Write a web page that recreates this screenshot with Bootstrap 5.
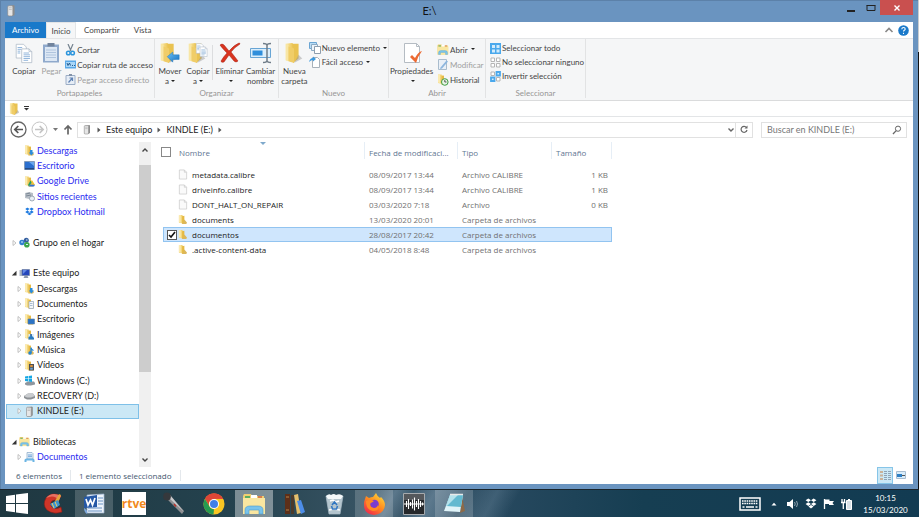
<!DOCTYPE html>
<html lang="es">
<head>
<meta charset="utf-8">
<meta name="viewport" content="width=device-width, initial-scale=1">
<title>E:\</title>
<link href="https://cdn.jsdelivr.net/npm/bootstrap@5.3.0/dist/css/bootstrap.min.css" rel="stylesheet">
<style>
:root{--line:#e3e5e7;--frame:#6a94c0}
body{font-family:Lato,"Open Sans",sans-serif;font-size:9px;line-height:10px;color:#222;background:linear-gradient(#c9cdd0 52px,#111 52px)}
svg{display:block;flex:none}
button,input{font:inherit;color:inherit}
.plain{border:0;background:none;padding:0;color:inherit;text-decoration:none;white-space:nowrap}
.win{background:var(--frame);padding:0 5px 5px;margin-right:1px;min-height:0;box-shadow:inset 1px 1px #5c81a9}
.titlebar{height:22px}
.caption{font-size:11px;line-height:22px;color:#111}
.winctl{height:15px}
.ctl{width:19px;height:15px;display:grid;place-items:center}
.ctl-close{width:33px;background:#c9504f}
.tabs{height:16px;font-size:8px;color:#444}
.tab{height:16px;min-width:30px}
.tab-file{background:#1979ca;color:#fff;width:41px}
.tab-on{background:#f5f6f7;border:1px solid var(--line);border-bottom:0}
.ribbon{height:63px;background:#f5f6f7;border-top:1px solid var(--line);border-bottom:1px solid #dadbdc;font-size:8px;color:#444}
.group{border-right:1px solid #e2e3e4;padding:0 1px;margin-bottom:2px}
.g-clip{width:150px}.g-org{width:124px}.g-new{width:110px}.g-open{width:97px}.g-sel{width:100px}
.group-name{color:#959595;line-height:10px}
.big{display:flex;flex-direction:column;align-items:center;padding-top:3px;line-height:10px}
.big svg{margin-bottom:2px}
.w28{width:28px}.w31{width:31px}.w43{width:43px}
.split{width:1px;margin:6px 1px 8px 0;background:#dcdddf}
.off{color:#a0a0a0}
.minis{padding-top:3px}
.minis .plain{display:flex;align-items:center;gap:1px;height:15px}
.minis-tight{padding-top:2px}
.minis-tight .plain{height:14px}
.caret{display:inline-block;border:2px solid transparent;border-top-color:#222;border-bottom:0;margin:0 0 1px 2px;vertical-align:middle}
.qat{height:16px;border-bottom:1px solid var(--line)}
.addr{height:25px;padding:0 6px 0 5px}
.box{height:16px;border:1px solid #e1e1e1;background:#fff}
.search{width:146px}
.search input{min-width:0;border:0;outline:0;padding:0 0 0 5px;background:none}
.search input::placeholder{color:#777;opacity:1}
.side{width:134px}
.tree{padding:1px 0 2px 1px}
.tree li{flex:1 1 0;min-height:0;display:flex}
.node{display:flex;align-items:center;flex:1;color:#222;text-decoration:none;white-space:nowrap;border:1px solid transparent;padding-left:4px}
.node.deep{padding-left:9px}
.node .ic{width:11px;height:11px;margin-right:3px}
.node.deep .ic{margin-right:2px}
.tw{width:8px;height:6px}
.node.blue{color:#2a2af0}
.node.on{background:#cbe8f6;border-color:#7ec0e8}
.sbar{width:12px;background:#f0f0f0}
.sbar-btn{height:23px;display:grid;place-items:center}
.thumb{flex:207;background:#cdcdcd}
.trail{flex:72}
.files,.status{font-family:"Open Sans","Noto Sans",sans-serif;font-size:8px}
.files{width:449px;table-layout:fixed;border-collapse:separate;border-spacing:0;margin-left:12px;white-space:nowrap}
.files th{height:25px;font-weight:400;color:#5f7692;vertical-align:top;padding:6px 4px 0;background:linear-gradient(#e6eef6,#e6eef6) right top/1px 17px no-repeat}
.files th.nm{padding-left:1px;position:relative}
.files th.ck{background:none;padding:5px 0 0}
.sorted{position:absolute;left:81px;top:0}
.files td{height:15px;padding:0 4px;color:#707070;border:1px solid transparent;border-width:1px 0;line-height:13px}
.files td.nm{color:#222;padding-left:0}
.files td.ck{padding:0 0 0 3px}
.files tr.on td{background:#cfe6fd;border-color:#92c4f0}
.files tr.on td:first-child{border-left-width:1px}
.files tr.on td:last-child{border-right-width:1px}
.c-ck{width:15px}.c-nm{width:187px}.c-dt{width:93px}.c-tp{width:94px}
.tick{appearance:none;width:10px;height:10px;margin:0;border:1px solid #888;background:#fff;display:block}
th .tick{margin-left:-2px}
.tick:checked{border-color:#555;background:#fff url("data:image/svg+xml,%3Csvg xmlns='http://www.w3.org/2000/svg' viewBox='0 0 8 8'%3E%3Cpath d='M1 4l2 2 4-5' fill='none' stroke='%23111' stroke-width='1.6'/%3E%3C/svg%3E") center/8px no-repeat}
.status{height:17px;color:#44586f;padding-left:11px}
.status span{border-right:1px solid #e4e8ec;padding-right:8px;margin-right:8px;line-height:11px}
.view{width:16px;height:17px;display:grid;place-items:center;border:1px solid transparent}
.view.on{background:#cbe8f6;border-color:#86c5e8}
.bar{height:28px;border-top:1px solid #1a242b;color:#fff;
 background:linear-gradient(118deg,transparent 0 330px,#8aa6bc66 350px,transparent 366px,#9ab5ca55 385px,#6e8ea655 400px,transparent 415px,#9ab5ca33 440px,transparent 460px),
 linear-gradient(90deg,#1f3841,#24424e 25%,#34505f 37%,#3f5c70 46%,#26485e 55%,#163e52 70%,#123b52)}
.task{width:38px;height:27px;display:grid;place-items:center}
.task.home{width:33px}
.tasks{gap:2px}
.task.run{background:#ffffff2e}
.task.front{background:#ffffff66}
.tray{gap:6px;padding-right:11px}
.clock{font-size:8px;line-height:12px;width:45px}
</style>
<script src="https://cdn.jsdelivr.net/npm/bootstrap@5.3.0/dist/js/bootstrap.bundle.min.js"></script>
</head>
<body class="vh-100 overflow-hidden d-flex flex-column">
<svg width="0" height="0" class="position-absolute" aria-hidden="true">
 <defs>
  <linearGradient id="gy" x1="0" x2="1"><stop offset="0" stop-color="#fbe9a4"/><stop offset="1" stop-color="#e8bf4b"/></linearGradient>
  <linearGradient id="gb" x1="0" x2="1" y2="1"><stop offset="0" stop-color="#6cc0f5"/><stop offset="1" stop-color="#1673c4"/></linearGradient>
 </defs>
 <symbol id="folder" viewBox="0 0 11 11"><path d="M1 .5h3.500l1 1V10l-4.500-1z" fill="#f3d67c"/><path d="M4.500 2L7 1.500v8l-2.500 1z" fill="#e5b944"/><path d="M7 5.500l3 3.500-1 1.500H4.500z" fill="#dcb75a"/><path d="M1 .5h2V9l-2-.5z" fill="#fbeab0"/></symbol>
 <symbol id="page" viewBox="0 0 11 11"><path d="M1.500.5h5.500l2.500 2.500v7.500h-8z" fill="#fafafa" stroke="#c9c9c9" stroke-width=".8"/><path d="M7 .5V3h2.500" fill="none" stroke="#c9c9c9" stroke-width=".8"/></symbol>
 <symbol id="bigfolder" viewBox="0 0 20 24"><path d="M1 2l7-1 2 2v19l-9-2z" fill="url(#gy)"/><path d="M8 2l7 0v16l-6 5V7z" fill="#e9c251"/><path d="M1 2l3 1v18l-3-1z" fill="#f8e6a6"/><path d="M4 5l6 2v16l-6-2z" fill="#f0cd68"/><path d="M15 14l4 4-9 5z" fill="#9997" /></symbol>
 <symbol id="sheets" viewBox="0 0 20 24"><g fill="#fff" stroke="#aab7c4" stroke-width=".8"><path d="M1.500 2.500h8l3 3v12h-11z"/><path d="M7.500 7.500h8l3 3v12h-11z"/></g><path d="M3 6h5M3 8h4M3 10h3M3 12h3M9.500 12h6M9.500 14h7M9.500 16h7M9.500 18h7M9.500 20h5" stroke="#7da8d4" stroke-width=".9"/><path d="M15.500 7.500v3h3" fill="none" stroke="#aab7c4" stroke-width=".8"/></symbol>
 <symbol id="drive" viewBox="0 0 11 11"><path d="M3 1.500l5-1 .8.700v8L7.500 10.500H3z" fill="#8d8d8d"/><rect x="2.500" y="1.200" width="4.700" height="9.300" rx="1" fill="#e6e6e6" stroke="#8b8b8b" stroke-width=".6"/><path d="M3.500 3h2.700M3.500 4.500h2.700" stroke="#aaa" stroke-width=".6"/></symbol>
 <symbol id="closed" viewBox="0 0 8 6"><path d="M2 .5l3 2.500-3 2.500z" fill="#fff" stroke="#a9a9a9" stroke-width=".7"/></symbol>
 <symbol id="opened" viewBox="0 0 8 6"><path d="M5.500.8v4.700H.8z" fill="#333"/></symbol>
 <symbol id="more" viewBox="0 0 6 8"><path d="M1.500 1.500L4.500 4l-3 2.500z" fill="#555"/></symbol>
 <symbol id="dropbox" viewBox="0 0 12 11"><path d="M3.300.5L6 2.300 3.300 4.100.6 2.300zM8.700.5l2.700 1.800-2.700 1.800L6 2.300zM3.300 4.300L6 6.100 3.300 7.900.6 6.100zM8.700 4.300l2.700 1.800-2.700 1.800L6 6.100zM6 6.900l2.600 1.700L6 10.400 3.400 8.600z" fill="currentColor"/></symbol>
 <symbol id="explorer" viewBox="0 0 24 22"><path d="M1 3l1-2h7l1 2h12v18H1z" fill="#f0cf71"/><path d="M3 3h5v3H3z" fill="#5bad62"/><path d="M9 2h6v4H9z" fill="#fff"/><path d="M16 3h4v3h-4z" fill="#d87c4e"/><path d="M1 5h22v16H1z" fill="#f9e6a0"/><path d="M3 21v-4q0-4 5-4h8q5 0 5 4v4h-4v-4H7v4z" fill="#78c3ec" stroke="#4a9bcc" stroke-width=".6"/></symbol>
</svg>

<main class="win flex-grow-1 d-flex flex-column">
 <header class="titlebar d-flex align-items-start justify-content-between">
  <svg class="mt-1" width="12" height="13"><use href="#drive"/></svg>
  <div class="caption flex-grow-1 text-center">E:\</div>
  <div class="winctl d-flex">
   <button class="plain ctl" aria-label="Minimizar"><svg width="9" height="11"><path d="M0 8h8v2H0z" fill="#222"/></svg></button>
   <button class="plain ctl" aria-label="Maximizar"><svg width="10" height="8"><path d="M1 1.500h8v5H1z" fill="none" stroke="#222"/><path d="M.5 1h9v1h-9z" fill="#222"/></svg></button>
   <button class="plain ctl ctl-close" aria-label="Cerrar"><svg width="8" height="8"><path d="M1.500 1.500l5 5M6.500 1.500l-5 5" stroke="#fff" stroke-width="1.400"/></svg></button>
  </div>
 </header>

 <nav class="tabs bg-white d-flex align-items-center">
  <button class="plain tab tab-file">Archivo</button>
  <button class="plain tab tab-on">Inicio</button>
  <button class="plain tab px-2">Compartir</button>
  <button class="plain tab px-1">Vista</button>
  <button class="plain ms-auto me-1" aria-label="Minimizar cinta"><svg width="10" height="8"><path d="M1.500 6L5 2.500 8.500 6" fill="none" stroke="#888" stroke-width="1.600"/></svg></button>
  <button class="plain me-1" aria-label="Ayuda"><svg width="11" height="11" viewBox="0 0 11 11"><circle cx="5.500" cy="5.500" r="5.300" fill="#1979ca"/><path d="M3.800 4.200q0-1.700 1.700-1.700t1.700 1.500q0 .8-.9 1.300-.8.500-.8 1.300M5.500 7.700v1.200" fill="none" stroke="#fff" stroke-width="1.100"/></svg></button>
 </nav>

 <section class="ribbon d-flex" aria-label="Cinta">
  <div class="group g-clip d-flex flex-column">
   <div class="d-flex flex-grow-1 ps-1">
    <button class="plain big w28"><svg width="20" height="22"><use href="#sheets"/></svg>Copiar</button>
    <button class="plain big w28 off"><svg width="18" height="22" viewBox="0 0 18 22"><rect x="1" y="2.500" width="16" height="18" fill="#8fa9cc"/><path d="M3 5h12v14H3z" fill="#dce7f4"/><path d="M5.500 1h7v3.500h-7z" fill="#71839c"/><path d="M4 8h10M4 10.500h10M4 13h10M4 15.500h10" stroke="#afc4de"/></svg>Pegar</button>
    <div class="minis">
     <button class="plain"><svg width="11" height="12" viewBox="0 0 11 12"><path d="M3 0l3 7M8 0L5 7" stroke="#75838f" stroke-width="1.200"/><circle cx="3.300" cy="9" r="1.800" fill="none" stroke="#2c95dc" stroke-width="1.500"/><circle cx="7.600" cy="9" r="1.800" fill="none" stroke="#2c95dc" stroke-width="1.500"/></svg>Cortar</button>
     <button class="plain"><svg width="11" height="9"><path d="M0 .5h11v8H0z" fill="#5aa8e6"/><path d="M1 2h9v5H1z" fill="#a9d6f7"/><path d="M2 3l1 2.500L4.500 3l1 2.500M7 5.500h1M9 5.500h1" stroke="#184f84" stroke-width=".9" fill="none"/></svg>Copiar ruta de acceso</button>
     <button class="plain off"><svg width="11" height="11"><path d="M1 1.500h9v9H1z" fill="#e6edf6" stroke="#9caec6"/><path d="M4 0h3v2H4z" fill="#8493a8"/><path d="M3.500 8.500l3.500-4M4.500 4H7.500v3" stroke="#5f82b4" stroke-width="1.200" fill="none"/></svg>Pegar acceso directo</button>
    </div>
   </div>
   <div class="group-name text-center">Portapapeles</div>
  </div>
  <div class="group g-org d-flex flex-column">
   <div class="d-flex flex-grow-1">
    <button class="plain big w28"><svg width="22" height="22" viewBox="0 0 22 24"><use href="#bigfolder" width="20" height="24"/><path d="M8 16l6-5v3h7v5h-7v3z" fill="url(#gb)" stroke="#1b74bd" stroke-width=".5"/></svg>Mover<span>a<i class="caret"></i></span></button>
    <button class="plain big w28"><svg width="22" height="22" viewBox="0 0 22 24"><use href="#bigfolder" width="20" height="24"/><use href="#sheets" x="8" y="0" width="14" height="17"/></svg>Copiar<span>a<i class="caret"></i></span></button>
    <div class="split"></div>
    <button class="plain big w31"><svg width="22" height="22" viewBox="0 0 22 22"><path d="M1 3q2-2 4 0l5 6q5-6 10-8 1 0 1 1-5 3-9 8 4 5 7 9-2 2-4 0l-5-6-5 7q-3 1-3-1 3-5 6-8Q3 6 1 3z" fill="#d9341f" stroke="#a52113" stroke-width=".5"/></svg>Eliminar<i class="caret mt-1"></i></button>
    <button class="plain big w31"><svg width="24" height="22" viewBox="0 0 24 22"><path d="M1.500 6.500h20v9h-20z" fill="#dceefb" stroke="#68a5d5"/><path d="M3.500 8.500h10v5h-10z" fill="#2f8edb"/><path d="M14 1.500q4 0 4 2 0-2 4-2M18 3v16M14 20.500q4 0 4-2 0 2 4 2" fill="none" stroke="#6f7c88" stroke-width="1.500"/></svg>Cambiar<span>nombre</span></button>
   </div>
   <div class="group-name text-center">Organizar</div>
  </div>
  <div class="group g-new d-flex flex-column">
   <div class="d-flex flex-grow-1">
    <button class="plain big w31"><svg width="20" height="22"><use href="#bigfolder"/></svg>Nueva<span>carpeta</span></button>
    <div class="minis minis-tight">
     <button class="plain"><svg width="12" height="12"><path d="M.5.500h7v6h-7z" fill="#b9dcf5" stroke="#6aa5d3"/><path d="M2.500 2.500h6v6h-6z" fill="#edf4fa" stroke="#8baac4"/><path d="M5.500 4.500h6v7h-6z" fill="#fff" stroke="#8d9dad"/></svg>Nuevo elemento <i class="caret"></i></button>
     <button class="plain"><svg width="12" height="12"><path d="M3.500 1.500h5l2 2v8h-7z" fill="#fff" stroke="#a7b1ba"/><path d="M0 6q1-4 4-4V.5L7 3 4 5.500V4Q2 4 0 6z" fill="#3c9ae0"/></svg>Fácil acceso <i class="caret"></i></button>
    </div>
   </div>
   <div class="group-name text-center">Nuevo</div>
  </div>
  <div class="group g-open d-flex flex-column">
   <div class="d-flex flex-grow-1 gap-1">
    <button class="plain big w43"><svg width="22" height="22" viewBox="0 0 22 22"><path d="M3.500 1.500h12l3 3v16h-15z" fill="#fff" stroke="#b5bcc3"/><path d="M15.500 1.500v3h3" fill="none" stroke="#b5bcc3"/><path d="M9 15l2-2 3 3q3-6 7-7-4 5-6 12z" fill="#ec6a33"/></svg>Propiedades<i class="caret mt-1"></i></button>
    <div class="minis">
     <button class="plain"><svg width="12" height="11"><use href="#explorer"/></svg>Abrir <i class="caret"></i></button>
     <button class="plain off"><svg width="12" height="11"><path d="M1.500.5h8v10h-8z" fill="#eaf0f7" stroke="#a9bccd"/><path d="M3.500 8.500l6-7 1.500 1-6 7-2 .5z" fill="#8db6de"/></svg>Modificar</button>
     <button class="plain"><svg width="12" height="12"><use href="#folder" width="11" height="11"/><circle cx="7.800" cy="8" r="3.300" fill="#e8f5e6" stroke="#3f9c42"/><path d="M7.800 6v2h1.700" stroke="#333" fill="none" stroke-width=".8"/></svg>Historial</button>
    </div>
   </div>
   <div class="group-name text-center">Abrir</div>
  </div>
  <div class="group g-sel d-flex flex-column px-1">
   <div class="minis minis-tight flex-grow-1">
    <button class="plain"><svg width="11" height="11"><path d="M0 0h11v11H0z" fill="#4aa8ec"/><path d="M2 2h3v3H2zM6.500 2h3v3h-3zM2 6.500h3v3H2zM6.500 6.500h3v3h-3z" fill="#d3ebfb"/></svg>Seleccionar todo</button>
    <button class="plain"><svg width="11" height="11"><path d="M1 1h3.500v3.500H1zM6.500 1H10v3.500H6.500zM1 6.500h3.500V10H1zM6.500 6.500H10V10H6.500z" fill="#fff" stroke="#b5b5b5"/></svg>No seleccionar ninguno</button>
    <button class="plain"><svg width="11" height="11"><path d="M1 1h3.500v3.500H1zM6.500 6.500H10V10H6.500z" fill="#fff" stroke="#b5b5b5"/><path d="M6.500 1H10v3.500H6.500zM1 6.500h3.500V10H1z" fill="#d3ebfb" stroke="#4aa8ec" stroke-width="1.800"/></svg>Invertir selección</button>
   </div>
   <div class="group-name text-center">Seleccionar</div>
  </div>
 </section>

 <div class="qat bg-white d-flex align-items-center ps-1 gap-1">
  <button class="plain" aria-label="Nueva carpeta"><svg width="10" height="12" viewBox="1 1 15 22"><use href="#bigfolder" width="20" height="24"/></svg></button>
  <button class="plain" aria-label="Personalizar"><svg width="7" height="7"><path d="M1 1.500h5" stroke="#333"/><path d="M1 3h5L3.500 5.500z" fill="#333"/></svg></button>
 </div>

 <div class="addr bg-white d-flex align-items-center">
  <button class="plain" aria-label="Atrás"><svg width="17" height="17" viewBox="0 0 17 17"><circle cx="8.500" cy="8.500" r="7.500" fill="none" stroke="#666" stroke-width="1.300"/><path d="M13 8.500H5M8.300 5L4.800 8.500l3.500 3.500" fill="none" stroke="#555" stroke-width="1.700"/></svg></button>
  <button class="plain ms-1" aria-label="Adelante"><svg width="17" height="17" viewBox="0 0 17 17"><circle cx="8.500" cy="8.500" r="7.500" fill="none" stroke="#c4c4c4"/><path d="M4 8.500h8M8.700 5l3.500 3.500L8.700 12" fill="none" stroke="#c4c4c4" stroke-width="1.600"/></svg></button>
  <button class="plain ms-1" aria-label="Recientes"><svg width="7" height="5"><path d="M1 1h5L3.500 4z" fill="#777"/></svg></button>
  <button class="plain ms-1 me-1" aria-label="Subir"><svg width="10" height="11"><path d="M5 10.500V2M1.500 5.500L5 2l3.500 3.500" fill="none" stroke="#666" stroke-width="1.700"/></svg></button>
  <div class="box d-flex align-items-center flex-grow-1 ps-1 gap-1">
   <svg width="10" height="11"><use href="#drive"/></svg>
   <svg width="6" height="8"><use href="#more"/></svg>
   <a class="plain" href="#">Este equipo</a>
   <svg width="6" height="8"><use href="#more"/></svg>
   <a class="plain" href="#">KINDLE (E:)</a>
   <svg width="6" height="8"><use href="#more"/></svg>
   <button class="plain ms-auto" aria-label="Anteriores"><svg width="8" height="6"><path d="M1.500 1.500L4 4l2.500-2.500" fill="none" stroke="#666" stroke-width="1.400"/></svg></button>
  </div>
  <button class="plain box border-start-0 px-1" aria-label="Actualizar"><svg width="8" height="9"><path d="M6.500 2.500A3 3 0 1 0 7 5" fill="none" stroke="#666" stroke-width="1.200"/><path d="M7.500.500v3h-3z" fill="#666"/></svg></button>
  <form class="box search d-flex align-items-center ms-2" role="search">
   <input class="flex-grow-1" type="text" placeholder="Buscar en KINDLE (E:)" aria-label="Buscar en KINDLE (E:)">
   <svg class="me-1" width="10" height="10"><circle cx="6" cy="3.700" r="2.600" fill="none" stroke="#666"/><path d="M4.200 5.600L1 9" stroke="#666" stroke-width="1.300"/></svg>
  </form>
 </div>

 <div class="d-flex flex-grow-1 bg-white overflow-hidden">
  <aside class="side d-flex">
   <ul class="tree list-unstyled mb-0 d-flex flex-column flex-grow-1">
    <li><a class="node deep blue" href="#"><span class="tw"></span><svg class="ic"><use href="#folder"/><path d="M6 5h2.500v2.500H10L7.300 10.500 4.800 7.500H6z" fill="#2c8ddb"/></svg>Descargas</a></li>
    <li><a class="node deep blue" href="#"><span class="tw"></span><svg class="ic"><path d="M.5 1.500h10v8H.5z" fill="#2c70cf" stroke="#7a8ea6" stroke-width=".7"/><path d="M5 2h5v4z" fill="#69a7ee"/><path d="M1 8h9v1.500H1z" fill="#234a86"/></svg>Escritorio</a></li>
    <li><a class="node deep blue" href="#"><span class="tw"></span><svg class="ic"><use href="#folder"/><path d="M6.500 4.500L4 9l1 1.500L8 6z" fill="#26a061"/><path d="M6.500 4.500H8.300L11 9H9z" fill="#f5c22c"/><path d="M5 10.500L6 8.700h5l-1 1.800z" fill="#3372d8"/></svg>Google Drive</a></li>
    <li><a class="node deep blue" href="#"><span class="tw"></span><svg class="ic"><path d="M1 2l4-1 4 1v5L5 8 1 7z" fill="#b8bfc7"/><path d="M2 3l4-1M2 5l5-1" stroke="#7b8794"/><circle cx="8" cy="7.500" r="2.500" fill="#e9eff5" stroke="#8b98a6" stroke-width=".8"/></svg>Sitios recientes</a></li>
    <li><a class="node deep blue" href="#"><span class="tw"></span><svg class="ic" viewBox="-1 -1 14 13" color="#1f7be0"><use href="#dropbox" width="12" height="11"/></svg>Dropbox Hotmail</a></li>
    <li></li>
    <li><a class="node" href="#"><svg class="tw"><use href="#closed"/></svg><svg class="ic"><circle cx="3" cy="5.500" r="2.700" fill="#3280cf"/><circle cx="7.300" cy="3.300" r="2.500" fill="#355f9f"/><circle cx="7.800" cy="7.700" r="2.800" fill="#3ba54a"/><path d="M2 5h2M7 3h1.500M7 7.500h2" stroke="#d4edff"/></svg>Grupo en el hogar</a></li>
    <li></li>
    <li><a class="node" href="#"><svg class="tw"><use href="#opened"/></svg><svg class="ic"><path d="M.5 2h3v6h-3z" fill="#aab5c4"/><path d="M3 1.500h7.500v6H3z" fill="#2446bb" stroke="#7183a5" stroke-width=".7"/><path d="M5.500 8h3l1 2h-5z" fill="#8c98ab"/><path d="M4 2h4L4 6z" fill="#6389e5"/></svg>Este equipo</a></li>
    <li><a class="node deep" href="#"><svg class="tw"><use href="#closed"/></svg><svg class="ic"><use href="#folder"/><path d="M6 5h2.500v2.500H10L7.300 10.500 4.800 7.500H6z" fill="#2c8ddb"/></svg>Descargas</a></li>
    <li><a class="node deep" href="#"><svg class="tw"><use href="#closed"/></svg><svg class="ic"><use href="#folder"/><path d="M5 3.500h4.500v7H5z" fill="#f4f7fa" stroke="#94a5b6" stroke-width=".7"/><path d="M6 5.500h2.500M6 7.500h2.500" stroke="#86a3c2" stroke-width=".7"/></svg>Documentos</a></li>
    <li><a class="node deep" href="#"><svg class="tw"><use href="#closed"/></svg><svg class="ic"><use href="#folder"/><path d="M4 5h6.500v5H4z" fill="#2b73c4" stroke="#5a7fa6" stroke-width=".6"/></svg>Escritorio</a></li>
    <li><a class="node deep" href="#"><svg class="tw"><use href="#closed"/></svg><svg class="ic"><use href="#folder"/><path d="M4.500 5H10v5.500H4.500z" fill="#d6ecfb"/><path d="M4.500 8l3-1.500L10 9v1.500H4.500z" fill="#287bc0"/><circle cx="7" cy="6" r="1" fill="#23588c"/></svg>Imágenes</a></li>
    <li><a class="node deep" href="#"><svg class="tw"><use href="#closed"/></svg><svg class="ic"><use href="#folder"/><path d="M7 9V3.500q0 2 2.500 3" stroke="#2386d6" stroke-width="1.300" fill="none"/><circle cx="6" cy="9" r="1.700" fill="#2386d6"/></svg>Música</a></li>
    <li><a class="node deep" href="#"><svg class="tw"><use href="#closed"/></svg><svg class="ic"><use href="#folder"/><path d="M5 4h5v6.500H5z" fill="#4b4f55"/><path d="M6.200 5h2.600v2H6.200z" fill="#d8913e"/><path d="M6.200 7.700h2.600v2H6.200z" fill="#6ba3d4"/></svg>Vídeos</a></li>
    <li><a class="node deep" href="#"><svg class="tw"><use href="#closed"/></svg><svg class="ic"><path d="M1 8l3-1.500h6L11 8v1.500L7 10.500H3L1 9.500z" fill="#8e969e"/><path d="M1 1.500L4 1v2.500H1zM4.600 1L8 .5v3H4.600zM1 4h3v2.500L1 6zM4.600 4H8v3l-3.400-.5z" fill="#16a7e4"/></svg>Windows (C:)</a></li>
    <li><a class="node deep" href="#"><svg class="tw"><use href="#closed"/></svg><svg class="ic"><path d="M0 6l4-2.500h5L11 6v2L7 9.500H3L0 8z" fill="#8c9094"/><path d="M0 6l4-2.500h5L11 6 7 7.500H3z" fill="#c9cccf"/></svg>RECOVERY (D:)</a></li>
    <li><a class="node deep on" href="#" aria-current="true"><svg class="tw"><use href="#closed"/></svg><svg class="ic"><use href="#drive"/></svg>KINDLE (E:)</a></li>
    <li></li>
    <li><a class="node" href="#"><svg class="tw"><use href="#opened"/></svg><svg class="ic"><use href="#explorer"/></svg>Bibliotecas</a></li>
    <li><a class="node deep blue" href="#"><svg class="tw"><use href="#closed"/></svg><svg class="ic"><path d="M3 .5h5l1 1V7H3z" fill="#e8f1f9" stroke="#86a6c5" stroke-width=".7"/><path d="M4 3h4M4 4.700h4" stroke="#4c8fd0" stroke-width=".8"/><path d="M.5 10V8q0-1.500 2-1.500h6q2 0 2 1.500v2h-2V8.500h-6V10z" fill="#6cb5e4"/></svg>Documentos</a></li>
   </ul>
  </aside>
  <div class="sbar d-flex flex-column" aria-hidden="true">
   <div class="sbar-btn"><svg class="mb-2" width="8" height="6"><path d="M1.500 4.500L4 2l2.500 2.500" fill="none" stroke="#444" stroke-width="1.400"/></svg></div>
   <div class="thumb"></div>
   <div class="trail"></div>
   <div class="sbar-btn"><svg class="mt-2" width="8" height="6"><path d="M1.500 1.500L4 4l2.500-2.500" fill="none" stroke="#444" stroke-width="1.400"/></svg></div>
  </div>
  <section class="flex-grow-1">
   <table class="files">
    <colgroup><col class="c-ck"><col class="c-nm"><col class="c-dt"><col class="c-tp"><col></colgroup>
    <thead><tr>
     <th class="ck"><input class="tick" type="checkbox" aria-label="Seleccionar todos"></th>
     <th class="nm">Nombre<svg class="sorted" width="8" height="4"><path d="M1 0h6L4 3z" fill="#7fa9cc"/></svg></th>
     <th>Fecha de modificaci...</th><th>Tipo</th><th>Tamaño</th>
    </tr></thead>
    <tbody>
     <tr><td class="ck"></td><td class="nm"><div class="d-flex align-items-center gap-1"><svg width="10" height="11"><use href="#page"/></svg>metadata.calibre</div></td><td>08/09/2017 13:44</td><td>Archivo CALIBRE</td><td class="text-end">1 KB</td></tr>
     <tr><td class="ck"></td><td class="nm"><div class="d-flex align-items-center gap-1"><svg width="10" height="11"><use href="#page"/></svg>driveinfo.calibre</div></td><td>08/09/2017 13:44</td><td>Archivo CALIBRE</td><td class="text-end">1 KB</td></tr>
     <tr><td class="ck"></td><td class="nm"><div class="d-flex align-items-center gap-1"><svg width="10" height="11"><use href="#page"/></svg>DONT_HALT_ON_REPAIR</div></td><td>03/03/2020 7:18</td><td>Archivo</td><td class="text-end">0 KB</td></tr>
     <tr><td class="ck"></td><td class="nm"><div class="d-flex align-items-center gap-1"><svg width="10" height="11"><use href="#folder"/></svg>documents</div></td><td>13/03/2020 20:01</td><td>Carpeta de archivos</td><td></td></tr>
     <tr class="on"><td class="ck"><input class="tick" type="checkbox" checked aria-label="documentos"></td><td class="nm"><div class="d-flex align-items-center gap-1"><svg width="10" height="11"><use href="#folder"/></svg>documentos</div></td><td>28/08/2017 20:42</td><td>Carpeta de archivos</td><td></td></tr>
     <tr><td class="ck"></td><td class="nm"><div class="d-flex align-items-center gap-1"><svg width="10" height="11"><use href="#folder"/></svg>.active-content-data</div></td><td>04/05/2018 8:48</td><td>Carpeta de archivos</td><td></td></tr>
    </tbody>
   </table>
  </section>
 </div>

 <footer class="status bg-white d-flex align-items-center">
  <span>6 elementos</span><span>1 elemento seleccionado</span>
  <button class="plain view on ms-auto" aria-label="Detalles"><svg width="11" height="11"><path d="M0 1h3v2H0zM0 4.500h3v2H0zM0 8h3v2H0z" fill="#c9b29a"/><path d="M4 1.500h3M8 1.500h3M4 3.500h3M8 3.500h3M4 5.500h3M8 5.500h3M4 7.500h3M8 7.500h3M4 9.500h3M8 9.500h3" stroke="#8fa3b6"/></svg></button>
  <button class="plain view me-1" aria-label="Iconos grandes"><svg width="10" height="9"><path d="M.5.500h9v7h-9z" fill="#d8ecfa" stroke="#a8bdd0"/><path d="M1 3h5v3H1z" fill="#2d7fc4"/><path d="M6 4h3v1H6z" fill="#555"/></svg></button>
 </footer>
</main>

<nav class="bar d-flex align-items-center" aria-label="Barra de tareas">
 <div class="tasks d-flex">
  <button class="plain task home" aria-label="Inicio"><svg width="22" height="21" viewBox="0 0 22 21"><path d="M0 3l9-1.300V10H0zM10 1.500L22 0v10H10zM0 11h9v8.300L0 18zM10 11h12v10l-12-1.500z" fill="#fff"/></svg></button>
  <button class="plain task" aria-label="CCleaner"><svg width="22" height="22" viewBox="0 0 22 22"><path d="M18 3Q9-2 3 5q-4 7 1 12 6 5 15 2l-1-5q-5 3-9 0-3-3 0-6 3-2 6 0z" fill="#cf3528" stroke="#8d1c15" stroke-width=".6"/><path d="M18 3Q9-2 3 5q8-4 13 2z" fill="#e77263"/><path d="M12 8l4-7 2 1-3 8z" fill="#e5a43c"/><path d="M7 11l8-4 2 5-6 4z" fill="#3b93cf"/><path d="M9 10l2 5M12 8.500l2 5" stroke="#f3c95b"/></svg></button>
  <button class="plain task run" aria-label="Word"><svg width="22" height="21" viewBox="0 0 22 21"><path d="M4 2l17-1v19H4z" fill="#eef4fb" stroke="#9bb2cf" stroke-width=".7"/><path d="M15 5h5M15 8h5M15 11h5M5 15h14M5 18h14" stroke="#6992c4"/><path d="M1 4l13-2v12L1 15z" fill="#2558a6"/><path d="M3 6l2 6 2.500-5 2 5L12 5" stroke="#fff" stroke-width="1.700" fill="none"/><path d="M1 15q4 2 3 6-3-2-3-6z" fill="#7da7dc"/></svg></button>
  <button class="plain task" aria-label="rtve"><svg width="24" height="23" viewBox="0 0 24 23"><path d="M0 0h24v23H0z" fill="#fff"/><text x="12" y="16" text-anchor="middle" font-family="Open Sans" font-weight="700" font-size="12" fill="#f18a1d">rtve</text></svg></button>
  <button class="plain task" aria-label="Micrófono"><svg width="24" height="23" viewBox="0 0 24 23"><path d="M4 6l4-3 14 16-2 3z" fill="#8e8f92"/><path d="M6 5l2-2 14 17z" fill="#c9cacc"/><circle cx="5" cy="4.500" r="3.900" fill="#35383c"/><path d="M12 12l2 2.500" stroke="#b9322a" stroke-width="1.500"/></svg></button>
  <button class="plain task" aria-label="Chrome"><svg width="22" height="22" viewBox="0 0 22 22"><circle cx="11" cy="11" r="10.500" fill="#f9c623"/><path d="M11 11L1.900 5.800A10.500 10.500 0 0 1 20.100 5.800H11z" fill="#df4637"/><path d="M11 .5a10.500 10.500 0 0 1 9.100 5.300H11a5.200 5.200 0 0 0-4.500 7.800L1.900 5.800A10.500 10.500 0 0 1 11 .5z" fill="#df4637"/><path d="M1.900 5.800l4.600 7.800A5.200 5.200 0 0 0 11 16.200L10.500 21.500A10.500 10.500 0 0 1 1.900 5.800z" fill="#279b51"/><circle cx="11" cy="11" r="5" fill="#fff"/><circle cx="11" cy="11" r="4" fill="#3f7fe8"/></svg></button>
  <button class="plain task front" aria-label="Explorador"><svg width="24" height="22"><use href="#explorer"/></svg></button>
  <button class="plain task" aria-label="calibre"><svg width="23" height="22" viewBox="0 0 23 22"><path d="M2 1h5v20H2z" fill="#5d2f19"/><path d="M3 4h3M3 17h3" stroke="#b88347"/><path d="M8 2h3v19H8z" fill="#4c3a2a"/><path d="M11 2l4-1 3 19-4 1z" fill="#e5c06d"/><path d="M14 8l4-1 4 12-4 2z" fill="#4d8de8"/></svg></button>
  <button class="plain task" aria-label="Papelera"><svg width="19" height="22" viewBox="0 0 19 22"><path d="M1 3l17 0-3 18H4z" fill="#d5e2eacc" stroke="#aebfca" stroke-width=".7"/><path d="M1 3q3-3 5-1 3-2 5 0 4-2 7 1l-2 3H3z" fill="#f4f8fa"/><path d="M5 8l3-1 3 2 3-1M4 17l5-1 6 1" stroke="#fff" stroke-width="1.500"/><path d="M7 12l2.500-3 2.500 3M12.500 13l-1 3H7.500l-1-3" fill="none" stroke="#3076c2" stroke-width="1.500"/></svg></button>
  <button class="plain task run" aria-label="Firefox"><svg width="23" height="22" viewBox="0 0 23 22"><defs><linearGradient id="ff" x1=".9" y1="0" x2=".2" y2="1"><stop offset="0" stop-color="#ffe23e"/><stop offset=".5" stop-color="#ff8a1f"/><stop offset="1" stop-color="#f1244e"/></linearGradient></defs><path d="M2 6L3 3l3 2q2-1 4-1l3-4q1 3 4 5l1-1q4 4 4 8-1 9-11 10Q1 21 1 12q0-4 1-6z" fill="url(#ff)"/><circle cx="11.500" cy="11" r="4.300" fill="#7a3bd1"/><path d="M3 8q4-2 8 0l-2 1.500q-2 0-2 2 0 3 4 3.500 3 0 4-3 2 6-5 6-7-1-7-10z" fill="#ff8a26"/></svg></button>
  <button class="plain task" aria-label="Editor de audio"><svg width="22" height="22" viewBox="0 0 22 22"><path d="M.5.500h21v21H.5z" fill="#26282b" stroke="#a6aaae"/><path d="M1 1h20v6H1z" fill="#55585c"/><path d="M1 11h20M3.500 8v6M5.500 6v10M7.500 9v4M9.500 6.500v9M11.500 4.500v13M13.500 8v6M15.500 6v10M17.500 8v6M19.500 9.500v3" stroke="#fff" stroke-width="1.100"/></svg></button>
  <button class="plain task run" aria-label="Bloc de notas"><svg width="23" height="21" viewBox="0 0 23 21"><path d="M19 3l3 15-5 2z" fill="#8c6a48"/><path d="M7 2h13l-3 17-16-1z" fill="#dff3f8"/><path d="M7 2h13l-2 12-15-1z" fill="#62b9d0"/><path d="M7 2h8L4 13H3z" fill="#b4e2ec"/><path d="M7 1.500h13" stroke="#e9e9e9" stroke-width="1.500"/></svg></button>
 </div>
 <div class="tray d-flex align-items-center ms-auto">
  <button class="plain me-1" aria-label="Teclado"><svg width="22" height="14"><path d="M1 1h20v12H1z" fill="none" stroke="#fff" stroke-width="1.500"/><path d="M3 4h16M3 6.500h16" stroke="#fff" stroke-width="1.500" stroke-dasharray="1.600 .7"/><path d="M3.500 10h2M7 10h8M16.500 10h2" stroke="#fff" stroke-width="1.600"/></svg></button>
  <button class="plain me-1" aria-label="Iconos ocultos"><svg width="6" height="4"><path d="M.5 3.500L3 .8l2.500 2.700z" fill="#fff"/></svg></button>
  <button class="plain" aria-label="Volumen"><svg width="12" height="12"><path d="M0 4h2.500L6 1v10L2.500 8H0z" fill="#fff"/><path d="M7.500 4q1.500 2 0 4M9.500 3q2 3 0 6" stroke="#aebcc6" fill="none" stroke-width=".8"/></svg></button>
  <button class="plain" aria-label="Dropbox"><svg width="12" height="11"><use href="#dropbox"/></svg></button>
  <button class="plain" aria-label="Centro de actividades"><svg width="12" height="12"><path d="M1.500 1v10" stroke="#fff" stroke-width="1.300"/><path d="M2 1.500h4.500V3H11L9.500 5 11 7H6V6H2z" fill="#fff"/></svg></button>
  <button class="plain" aria-label="Batería"><svg width="12" height="12"><path d="M5.500 2.500h5v9h-5z" fill="#d9e2e8" stroke="#fff"/><path d="M7 1h2v1H7z" fill="#fff"/><path d="M1 1v3M3.500 1v3M0 4.500h4.500M2.300 4v7" stroke="#fff" stroke-width="1.300"/></svg></button>
  <time class="clock text-center ms-1" datetime="2020-03-15T10:15">10:15<br>15/03/2020</time>
 </div>
</nav>
</body>
</html>
